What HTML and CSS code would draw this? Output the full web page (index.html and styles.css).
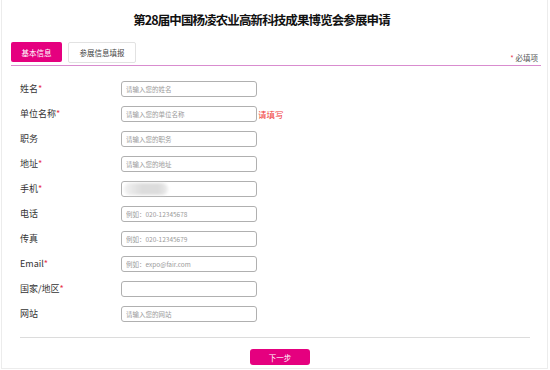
FILE: index.html
```html
<!DOCTYPE html>
<html lang="zh-CN">
<head>
    <meta charset="UTF-8">
    <title>第28届中国杨凌农业高新科技成果博览会参展申请</title>
    <link rel="stylesheet" href="styles.css">
</head>
<body>
    <div class="page">
        <h1>第28届中国杨凌农业高新科技成果博览会参展申请</h1>
        <div class="tabs">
            <span class="tab active">基本信息</span>
            <span class="tab">参展信息填报</span>
            <span class="required-note"><i>*</i> 必填项</span>
        </div>
        <form class="form">
            <div class="row"><label>姓名<i>*</i></label><input type="text" placeholder="请输入您的姓名"></div>
            <div class="row"><label>单位名称<i>*</i></label><input type="text" placeholder="请输入您的单位名称"><span class="error">请填写</span></div>
            <div class="row"><label>职务</label><input type="text" placeholder="请输入您的职务"></div>
            <div class="row"><label>地址<i>*</i></label><input type="text" placeholder="请输入您的地址"></div>
            <div class="row"><label>手机<i>*</i></label><div class="masked"><input type="text"><span class="blur"></span></div></div>
            <div class="row"><label>电话</label><input type="text" placeholder="例如：020-12345678"></div>
            <div class="row"><label>传真</label><input type="text" placeholder="例如：020-12345679"></div>
            <div class="row"><label>Email<i>*</i></label><input type="text" placeholder="例如：expo@fair.com"></div>
            <div class="row"><label>国家/地区<i>*</i></label><input type="text"></div>
            <div class="row"><label>网站</label><input type="text" placeholder="请输入您的网站"></div>
        </form>
        <div class="actions">
            <button type="button">下一步</button>
        </div>
    </div>
</body>
</html>
```

FILE: styles.css
```css
body {
    margin: 0;
    padding: 0;
    background-color: #fff;
    font-family: "Noto Sans CJK SC", "Noto Sans", sans-serif;
    color: #333;
}
.page {
    margin: 0 2px 0 1px;
    height: 369px;
    box-sizing: border-box;
    border: 1px solid #ececec;
    border-top: none;
}
h1 {
    margin: 0;
    padding: 13px 26px 0 0;
    height: 14px;
    line-height: 14px;
    font-size: 12.5px;
    font-weight: bold;
    letter-spacing: -0.9px;
    text-align: center;
    color: #111;
}
.tabs {
    display: flex;
    align-items: flex-start;
    margin: 15px 6px 0 9px;
    height: 23px;
    border-bottom: 1px solid #d98ccf;
}
.tab {
    display: flex;
    align-items: center;
    justify-content: center;
    height: 20px;
    box-sizing: border-box;
    border-radius: 2px;
    font-size: 7.5px;
    color: #444;
}
.tab.active {
    width: 51px;
    background-color: #e5007f;
    color: #fff;
}
.tab:not(.active) {
    width: 68px;
    height: 21px;
    margin-left: 6px;
    border: 1px solid #e2e2e2;
}
.required-note {
    margin-left: auto;
    margin-top: 10px;
    margin-right: 3px;
    font-size: 7.5px;
    color: #555;
}
.required-note i,
label i {
    font-style: normal;
    color: #e8334a;
}
.form {
    margin: 10px 0 0 18px;
}
.row {
    display: flex;
    align-items: center;
    height: 25px;
}
label {
    width: 101px;
    font-size: 9px;
    color: #333;
}
input {
    display: block;
    width: 136px;
    height: 16px;
    box-sizing: border-box;
    margin: 0;
    padding: 0 4px;
    border: 1px solid #b0b0b0;
    border-radius: 3px;
    font-family: inherit;
    font-size: 6.5px;
    outline: none;
}
input::placeholder {
    color: #9a9a9a;
}
.error {
    margin-left: 1px;
    font-size: 8.5px;
    color: #f03b3b;
}
.masked {
    position: relative;
    height: 16px;
}
.blur {
    position: absolute;
    left: 3px;
    top: 2px;
    width: 44px;
    height: 12px;
    border-radius: 6px;
    background: linear-gradient(90deg, #f2f2f2, #dcdcdc 40%, #dcdcdc 80%, #ededed);
    filter: blur(1.5px);
}
.actions {
    margin: 11px 17px 0 18px;
    padding-top: 11px;
    border-top: 1px solid #dcdcdc;
    display: flex;
    justify-content: center;
}
button {
    width: 60px;
    height: 16px;
    margin-left: 10px;
    padding: 0;
    border: none;
    border-radius: 3px;
    background-color: #e5007f;
    color: #fff;
    font-family: inherit;
    font-size: 7.5px;
}
```
